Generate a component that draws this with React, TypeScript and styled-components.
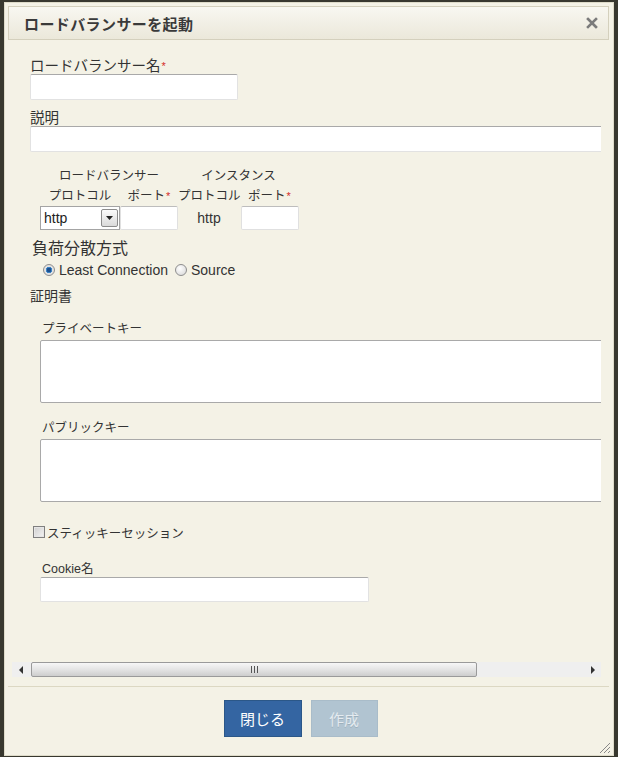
import React from "react";
import styled, { createGlobalStyle } from "styled-components";

const GlobalStyle = createGlobalStyle`
  * { box-sizing: border-box; }
  html, body {
    margin: 0;
    padding: 0;
    background: #38382f;
  }
  body {
    font-family: "Liberation Sans", "Noto Sans CJK JP", sans-serif;
    color: #333;
  }
`;

const Page = styled.div`
  padding: 2px 4px 0 4px;
  height: 757px;
`;

const Dialog = styled.div`
  position: relative;
  width: 610px;
  height: 754px;
  padding: 3px 4px 0 3px;
  background: #f4f2e6;
  border: 1px solid #dedbc9;
  display: flex;
  flex-direction: column;
`;

const TitleBar = styled.div`
  height: 34px;
  flex: none;
  display: flex;
  align-items: center;
  justify-content: space-between;
  padding: 0 10px 0 15px;
  border: 1px solid #d4d0bd;
  background: linear-gradient(#f8f7f1, #ebe8da);
`;

const Title = styled.span`
  font-size: 15px;
  font-weight: 600;
  color: #3a3a3a;
  letter-spacing: 0.4px;
`;

const CloseButton = styled.button`
  border: none;
  background: none;
  padding: 0;
  width: 12px;
  height: 12px;
  display: flex;
  cursor: pointer;
`;

const Body = styled.div`
  flex: none;
  margin: 0 8px 0 4px;
`;

const Viewport = styled.div`
  height: 622px;
  overflow: hidden;
`;

const Content = styled.div`
  width: 736px;
  height: 622px;
  padding: 18px 0 0 18px;
`;

const ScrollBar = styled.div`
  display: flex;
  align-items: stretch;
  height: 15px;
  background: #efefef;
`;

const ScrollArrow = styled.span`
  flex: none;
  width: 17px;
  display: flex;
  align-items: center;
  justify-content: center;
`;

const ScrollTrack = styled.div`
  flex: 1;
  padding: 0 2px;
  display: flex;
  align-items: stretch;
`;

const ScrollThumb = styled.div`
  height: 15px;
  border: 1px solid #9a9a9a;
  border-radius: 2px;
  background: linear-gradient(#f7f7f7, #e2e2e2 55%, #cdcdcd);
  display: flex;
  align-items: center;
  justify-content: center;
`;

const FieldLabel = styled.label<{ $size?: number; $indent?: number; $top?: number }>`
  display: block;
  font-size: ${({ $size }) => $size ?? 14.5}px;
  line-height: 16px;
  margin-left: ${({ $indent }) => $indent ?? 0}px;
  margin-top: ${({ $top }) => $top ?? 0}px;
  color: #333;
`;

const Required = styled.span`
  color: #d52b2b;
  font-size: 11px;
  vertical-align: top;
  margin-left: 1px;
`;

const TextInput = styled.input<{ $width: number; $height?: number; $top?: number }>`
  display: block;
  width: ${({ $width }) => $width}px;
  height: ${({ $height }) => $height ?? 26}px;
  margin-top: ${({ $top }) => $top ?? 0}px;
  background: #fff;
  border: 1px solid #e2e2e2;
  border-top-color: #a9a9a9;
  border-radius: 2px;
  font: 13px "Liberation Sans", sans-serif;
  padding: 2px 4px;
`;

const PortGrid = styled.div`
  display: grid;
  grid-template-columns: 80px 58px 62px 59px;
  grid-auto-rows: 20px;
  margin: 14px 0 0 10px;
  font-size: 12.5px;
  line-height: 20px;
`;

const HeadCell = styled.div<{ $span?: number }>`
  grid-column: span ${({ $span }) => $span ?? 1};
  text-align: center;
  white-space: nowrap;
`;

const InputCell = styled.div`
  height: 24px;
  display: flex;
  align-items: center;
  justify-content: center;
`;

const SelectBox = styled.div`
  position: relative;
  width: 80px;
  height: 24px;
`;

const Select = styled.select`
  appearance: none;
  width: 80px;
  height: 24px;
  border: 1px solid #a4a4a4;
  border-radius: 0;
  background: #fff;
  font: 14px "Liberation Sans", sans-serif;
  color: #222;
  padding: 0 0 0 3px;
`;

const SelectArrow = styled.span`
  position: absolute;
  top: 3px;
  right: 2px;
  width: 17px;
  height: 18px;
  border: 1px solid #8c8c8c;
  border-radius: 2px;
  background: linear-gradient(#fbfbfb, #dadada);
  display: flex;
  align-items: center;
  justify-content: center;
  pointer-events: none;
`;

const SmallInput = styled.input`
  width: 58px;
  height: 24px;
  background: #fff;
  border: 1px solid #e0e0e0;
  border-top-color: #bdbdbd;
  border-radius: 2px;
  font: 13px "Liberation Sans", sans-serif;
`;

const PlainText = styled.span`
  font-size: 14px;
  color: #333;
`;

const RadioRow = styled.div`
  display: flex;
  align-items: center;
  height: 20px;
  margin: 3px 0 0 13px;
  font-size: 14px;
`;

const RadioLabel = styled.label`
  display: flex;
  align-items: center;
  gap: 4px;
  margin-right: 7px;
`;

const Radio = styled.input.attrs({ type: "radio" })`
  appearance: none;
  margin: 0;
  width: 12px;
  height: 12px;
  border-radius: 50%;
  border: 1px solid #8e8e8e;
  background: radial-gradient(circle at 40% 35%, #ffffff, #d4d4d4);
  &:checked {
    background: radial-gradient(circle, #1b4f8e 0 2px, #3a84c6 2.5px 3px, #e2e2e2 3.5px);
  }
`;

const Section = styled.div<{ $indent?: number }>`
  margin-left: ${({ $indent }) => $indent ?? 0}px;
`;

const SubLabel = styled.div<{ $top: number }>`
  font-size: 12.5px;
  line-height: 20px;
  margin-top: ${({ $top }) => $top}px;
  padding-left: 2px;
`;

const KeyArea = styled.textarea`
  display: block;
  width: 690px;
  height: 63px;
  margin-top: 1px;
  resize: none;
  background: #fff;
  border: 1px solid #a9a9a9;
  border-radius: 2px;
`;

const CheckRow = styled.label`
  display: flex;
  align-items: center;
  height: 20px;
  margin: 20px 0 0 3px;
  font-size: 12.5px;
`;

const CheckBox = styled.input.attrs({ type: "checkbox" })`
  appearance: none;
  margin: 0 2px 0 0;
  width: 12px;
  height: 12px;
  border: 1px solid #7f7f7f;
  background: linear-gradient(135deg, #cfcfcf, #f4f4f4);
  box-shadow: inset 0 0 0 1px #e6e6e6;
`;

const Footer = styled.div`
  flex: 1;
  margin-top: 9px;
  border-top: 1px solid #dcd8c3;
  display: flex;
  justify-content: center;
  align-items: flex-start;
  gap: 9px;
  padding: 13px 16px 0 0;
`;

const ActionButton = styled.button<{ $primary?: boolean; $width: number }>`
  width: ${({ $width }) => $width}px;
  height: 37px;
  border: 1px solid ${({ $primary }) => ($primary ? "#2b5788" : "#a9bcc9")};
  background: ${({ $primary }) => ($primary ? "#3465a2" : "#b1c4d1")};
  color: ${({ $primary }) => ($primary ? "#ffffff" : "#e4ebf0")};
  font: 15px "Liberation Sans", "Noto Sans CJK JP", sans-serif;
  cursor: ${({ $primary }) => ($primary ? "pointer" : "default")};
  text-shadow: ${({ $primary }) => ($primary ? "none" : "0 1px 0 #9eb0bc")};
`;

const ResizeGrip = styled.svg`
  position: absolute;
  right: 2px;
  bottom: 1px;
`;

export default function App() {
  const viewport = 589;
  const contentWidth = 728;
  const track = viewport - 34 - 4;
  const thumbWidth = Math.round((track * viewport) / contentWidth);

  return (
    <>
      <GlobalStyle />
      <Page>
        <Dialog>
          <TitleBar>
            <Title>ロードバランサーを起動</Title>
            <CloseButton aria-label="close">
              <svg width="12" height="12" viewBox="0 0 12 12">
                <path d="M2 2 L10 10 M10 2 L2 10" stroke="#7b7b7b" strokeWidth="2.6" strokeLinecap="square" />
              </svg>
            </CloseButton>
          </TitleBar>

          <Body>
            <Viewport>
              <Content>
                <FieldLabel>
                  ロードバランサー名<Required>*</Required>
                </FieldLabel>
                <TextInput $width={208} />

                <FieldLabel $top={10}>説明</FieldLabel>
                <TextInput $width={700} />

                <PortGrid>
                  <HeadCell $span={2}>ロードバランサー</HeadCell>
                  <HeadCell $span={2}>インスタンス</HeadCell>
                  <HeadCell>プロトコル</HeadCell>
                  <HeadCell>
                    ポート<Required>*</Required>
                  </HeadCell>
                  <HeadCell>プロトコル</HeadCell>
                  <HeadCell>
                    ポート<Required>*</Required>
                  </HeadCell>
                  <InputCell>
                    <SelectBox>
                      <Select defaultValue="http">
                        <option value="http">http</option>
                        <option value="https">https</option>
                        <option value="tcp">tcp</option>
                      </Select>
                      <SelectArrow>
                        <svg width="7" height="4" viewBox="0 0 7 4">
                          <path d="M0 0 H7 L3.5 4 Z" fill="#222" />
                        </svg>
                      </SelectArrow>
                    </SelectBox>
                  </InputCell>
                  <InputCell>
                    <SmallInput />
                  </InputCell>
                  <InputCell>
                    <PlainText>http</PlainText>
                  </InputCell>
                  <InputCell>
                    <SmallInput />
                  </InputCell>
                </PortGrid>

                <FieldLabel $size={16} $indent={2} $top={15}>
                  負荷分散方式
                </FieldLabel>
                <RadioRow>
                  <RadioLabel>
                    <Radio name="algo" defaultChecked />
                    Least Connection
                  </RadioLabel>
                  <RadioLabel>
                    <Radio name="algo" />
                    Source
                  </RadioLabel>
                </RadioRow>

                <FieldLabel $size={14} $top={8}>
                  証明書
                </FieldLabel>
                <Section $indent={10}>
                  <SubLabel $top={15}>プライベートキー</SubLabel>
                  <KeyArea />
                  <SubLabel $top={15}>パブリックキー</SubLabel>
                  <KeyArea />
                </Section>

                <CheckRow>
                  <CheckBox />
                  スティッキーセッション
                </CheckRow>

                <Section $indent={10}>
                  <SubLabel $top={17}>Cookie名</SubLabel>
                  <TextInput $width={329} $height={25} $top={-2} />
                </Section>
              </Content>
            </Viewport>

            <ScrollBar>
              <ScrollArrow>
                <svg width="4" height="8" viewBox="0 0 4 8">
                  <path d="M4 0 V8 L0 4 Z" fill="#333" />
                </svg>
              </ScrollArrow>
              <ScrollTrack>
                <ScrollThumb style={{ width: thumbWidth }}>
                  <svg width="7" height="7" viewBox="0 0 7 7">
                    <path d="M0.5 0 V7 M3.5 0 V7 M6.5 0 V7" stroke="#555" strokeWidth="1" />
                  </svg>
                </ScrollThumb>
              </ScrollTrack>
              <ScrollArrow>
                <svg width="4" height="8" viewBox="0 0 4 8">
                  <path d="M0 0 V8 L4 4 Z" fill="#333" />
                </svg>
              </ScrollArrow>
            </ScrollBar>
          </Body>

          <Footer>
            <ActionButton $primary $width={78}>
              閉じる
            </ActionButton>
            <ActionButton $width={67} disabled>
              作成
            </ActionButton>
          </Footer>

          <ResizeGrip width="12" height="12" viewBox="0 0 12 12">
            <path d="M11 1 L1 11 M11 5 L5 11 M11 9 L9 11" stroke="#888" strokeWidth="1" />
          </ResizeGrip>
        </Dialog>
      </Page>
    </>
  );
}
